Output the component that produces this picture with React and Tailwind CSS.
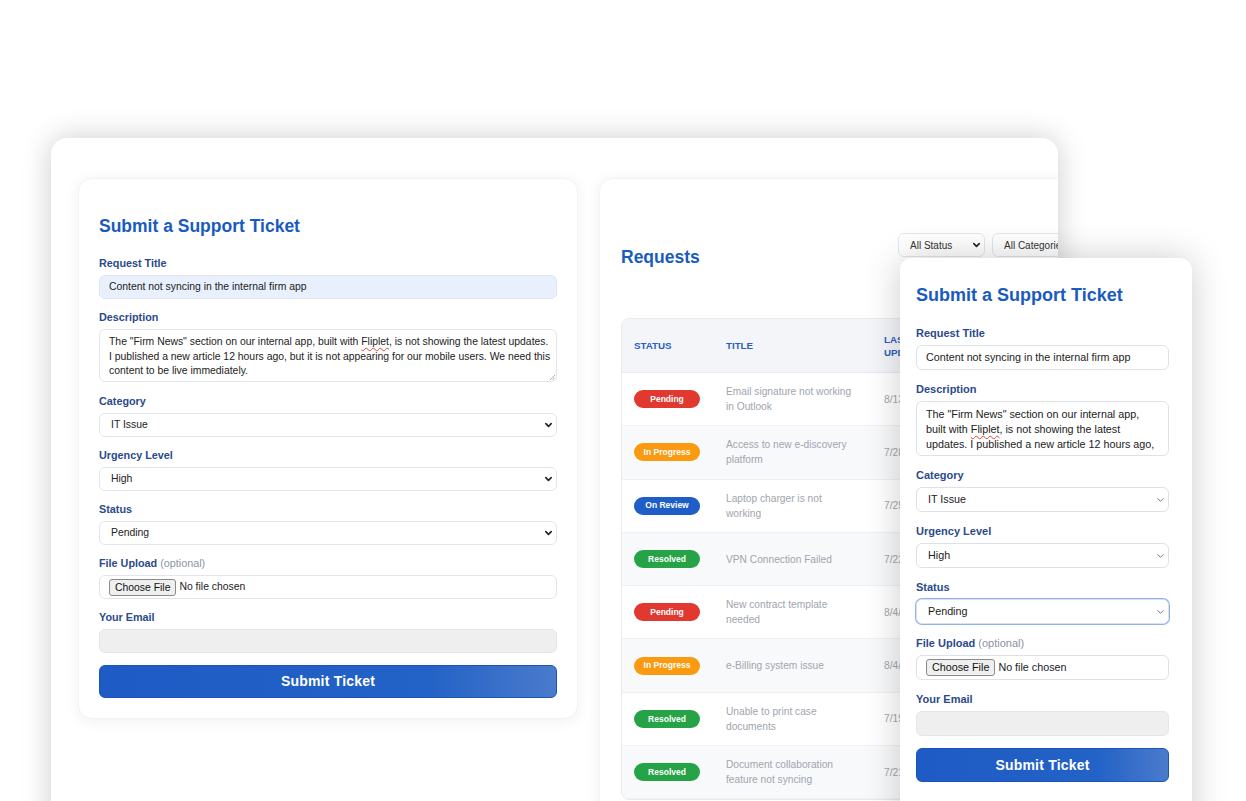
import React from 'react';

const FONT = { fontFamily: '"Liberation Sans", Arial, Helvetica, sans-serif' };

const BADGE = {
  Pending: 'bg-[#e1392f]',
  'In Progress': 'bg-[#fa9a10]',
  'On Review': 'bg-[#1e5ec6]',
  Resolved: 'bg-[#26a346]'
};

const REQUESTS = [
  { status: 'Pending', title: 'Email signature not working in Outlook', updated: '8/13/2025, 02:41 PM' },
  { status: 'In Progress', title: 'Access to new e-discovery platform', updated: '7/28/2025, 04:05 PM' },
  { status: 'On Review', title: 'Laptop charger is not working', updated: '7/25/2025, 01:12 PM' },
  { status: 'Resolved', title: 'VPN Connection Failed', updated: '7/22/2025, 02:08 PM' },
  { status: 'Pending', title: 'New contract template needed', updated: '8/4/2025, 10:32 AM' },
  { status: 'In Progress', title: 'e-Billing system issue', updated: '8/4/2025, 03:47 PM' },
  { status: 'Resolved', title: 'Unable to print case documents', updated: '7/19/2025, 11:06 AM' },
  { status: 'Resolved', title: 'Document collaboration feature not syncing', updated: '7/21/2025, 12:20 PM' }
];

const Chevron = ({ thin }) => (
  <svg
    width="9"
    height="9"
    viewBox="0 0 10 10"
    fill="none"
    stroke={thin ? '#777' : '#222'}
    strokeWidth={thin ? 1.1 : 1.8}
    strokeLinecap="round"
    strokeLinejoin="round"
    className="absolute right-[4px] top-1/2 -translate-y-1/2 pointer-events-none"
  >
    <path d="M2 3.5 5 6.5 8 3.5" />
  </svg>
);

const Squiggle = ({ children }) => (
  <span className="underline decoration-wavy decoration-[#e0443a] decoration-[0.7px] underline-offset-2">{children}</span>
);

function TicketForm({ narrow }) {
  const label = narrow
    ? 'block text-[11px] leading-[14px] font-bold text-[#2b4a8b] mb-[5px]'
    : 'block text-[10.8px] leading-[14px] font-bold text-[#2b4a8b] mb-[5px]';
  const box = narrow
    ? 'block w-full h-[25px] rounded-[6px] border border-[#dde2ea] text-[10.75px] text-[#222]'
    : 'block w-full h-[24px] rounded-[6px] border border-[#e2e6ec] text-[10.4px] text-[#222]';
  const gap = narrow ? 'mb-[12px]' : 'mb-[11px]';

  const Select = ({ value, focused }) => (
    <div className="relative">
      <select
        defaultValue={value}
        className={`${box} appearance-none bg-white pl-[11px] outline-none ${
          focused ? 'border-[#5d8fee] shadow-[0_0_0_1px_#8fb2f3]' : ''
        }`}
      >
        <option>{value}</option>
      </select>
      <Chevron thin={narrow} />
    </div>
  );

  return (
    <div style={FONT}>
      <h2
        className={
          narrow
            ? 'text-[18px] leading-[22px] font-bold text-[#1a5bbf] mb-[20px]'
            : 'text-[17.5px] leading-[22px] font-bold text-[#1a5bbf] mb-[19px]'
        }
      >
        Submit a Support Ticket
      </h2>

      <div className={narrow ? 'mb-[12px]' : 'mb-[11px]'}>
        <label className={label}>Request Title</label>
        <div
          className={`${box} flex items-center pl-[9px] ${narrow ? 'bg-white' : 'bg-[#e8f0fe] border-[#dbe5f5]'}`}
        >
          Content not syncing in the internal firm app
        </div>
      </div>

      <div className="mb-[12px]">
        <label className={label}>Description</label>
        {narrow ? (
          <div className="w-full h-[55px] rounded-[6px] border border-[#dde2ea] pl-[9px] pt-[5px] text-[10.75px] leading-[15px] text-[#222] overflow-hidden whitespace-nowrap">
            <div>The "Firm News" section on our internal app,</div>
            <div>
              built with <Squiggle>Fliplet</Squiggle>, is not showing the latest
            </div>
            <div>updates. I published a new article 12 hours ago,</div>
            <div>but it is not appearing for our mobile users. We need</div>
          </div>
        ) : (
          <div className="relative w-full h-[53px] rounded-[6px] border border-[#e2e6ec] pl-[9px] pt-[5px] text-[10.4px] leading-[14.6px] text-[#222] overflow-hidden whitespace-nowrap">
            <div>
              The "Firm News" section on our internal app, built with <Squiggle>Fliplet</Squiggle>, is not showing the latest
              updates.
            </div>
            <div>I published a new article 12 hours ago, but it is not appearing for our mobile users. We need this</div>
            <div>content to be live immediately.</div>
            <svg width="6" height="6" viewBox="0 0 6 6" className="absolute right-[1px] bottom-[1px]" stroke="#999" strokeWidth="0.8">
              <path d="M1 6 6 1M3.5 6 6 3.5" />
            </svg>
          </div>
        )}
      </div>

      <div className={gap}>
        <label className={label}>Category</label>
        <Select value="IT Issue" />
      </div>
      <div className={gap}>
        <label className={label}>Urgency Level</label>
        <Select value="High" />
      </div>
      <div className={gap}>
        <label className={label}>Status</label>
        <Select value="Pending" focused={narrow} />
      </div>

      <div className={gap}>
        <label className={label}>
          File Upload <span className="font-normal text-[#8a94a8]">(optional)</span>
        </label>
        <div className={`${box} flex items-center pl-[9px] bg-white`}>
          <span className="border border-[#8a8a8a] bg-[#efefef] rounded-[3px] px-[5px] leading-[15px] text-[#111]">Choose File</span>
          <span className="ml-[3px] text-[#222]">No file chosen</span>
        </div>
      </div>

      <div className="mb-[12px]">
        <label className={label}>Your Email</label>
        <div className={`${box} bg-[#efefef] border-[#e6e6e6]`} />
      </div>

      <button
        className={`block w-full ${narrow ? 'h-[34px]' : 'h-[33px]'} rounded-[6px] border border-[#1b55b8] bg-[linear-gradient(90deg,#1e5bc5_0%,#2362c6_72%,#4a7bcc_100%)] text-white font-bold text-[14px] tracking-[0.2px]`}
      >
        Submit Ticket
      </button>
    </div>
  );
}

function RequestsTable() {
  return (
    <div className="rounded-[8px] border border-[#e8ebf0] overflow-hidden" style={FONT}>
      <div className="flex h-[54px] items-center bg-[#f3f5f8] border-b border-[#e6e9ee] text-[9.75px] leading-[13px] font-bold text-[#2a5fbf] uppercase">
        <div className="w-[92px] pl-[12px]">Status</div>
        <div className="w-[158px] pl-[12px]">Title</div>
        <div className="w-[60px] pl-[12px]">Last Updated</div>
        <div className="pl-[12px]">Category</div>
      </div>
      {REQUESTS.map((r, i) => (
        <div
          key={i}
          className={`flex h-[53.3px] items-center border-b border-[#eef0f3] ${i % 2 === 1 ? 'bg-[#f8f9fb]' : 'bg-white'}`}
        >
          <div className="w-[92px] pl-[12px]">
            <span
              className={`flex h-[18px] w-[66px] items-center justify-center rounded-full text-[8.5px] font-bold text-white ${BADGE[r.status]}`}
            >
              {r.status}
            </span>
          </div>
          <div className="w-[158px] pl-[12px] pr-[16px] text-[10.2px] leading-[15px] text-[#a0a5ad]">{r.title}</div>
          <div className="w-[110px] pl-[12px] text-[10.2px] leading-[15px] text-[#a0a5ad]">{r.updated}</div>
        </div>
      ))}
    </div>
  );
}

export default function App() {
  return (
    <div className="relative w-[1246px] h-[801px] overflow-hidden bg-white" style={FONT}>
      <div className="ml-[51px] mt-[138px] w-[1007px] h-[700px] overflow-hidden rounded-[16px] bg-white shadow-[0_0_30px_rgba(0,0,0,0.2)]">
        <div className="flex gap-[21px] pl-[27px] pt-[40px]">
          <div className="w-[500px] shrink-0 self-start rounded-[14px] bg-white border border-[#f1f3f6] shadow-[0_2px_14px_rgba(20,40,90,0.07)] px-[20px] pt-[36px] pb-[20px]">
            <TicketForm />
          </div>

          <div className="w-[525px] h-[680px] shrink-0 rounded-[14px] bg-white border border-[#f1f3f6] shadow-[0_2px_14px_rgba(20,40,90,0.07)] px-[21px] pt-[54px]">
            <div className="flex items-start justify-between">
              <h2 className="mt-[13px] text-[17.5px] leading-[22px] font-bold text-[#1a5bbf]">Requests</h2>
              <div className="flex gap-[7px]">
                <div className="relative">
                  <select className="block appearance-none w-[87px] h-[24px] rounded-[6px] border border-[#e3e6eb] bg-white pl-[11px] text-[10px] text-[#333] outline-none">
                    <option>All Status</option>
                  </select>
                  <Chevron />
                </div>
                <div className="relative">
                  <select className="block appearance-none w-[110px] h-[24px] rounded-[6px] border border-[#e3e6eb] bg-white pl-[11px] text-[10px] text-[#333] outline-none">
                    <option>All Categories</option>
                  </select>
                  <Chevron />
                </div>
              </div>
            </div>
            <div className="mt-[50px]">
              <RequestsTable />
            </div>
          </div>
        </div>
      </div>

      {/* floating mobile-width copy of the form */}
      <div className="absolute left-[900px] top-[258px] w-[292px] h-[600px] rounded-[12px] bg-white shadow-[0_0_36px_rgba(0,0,0,0.2)] px-[16px] pt-[26px]">
        <div className="w-[253px]">
          <TicketForm narrow />
        </div>
      </div>
    </div>
  );
}
